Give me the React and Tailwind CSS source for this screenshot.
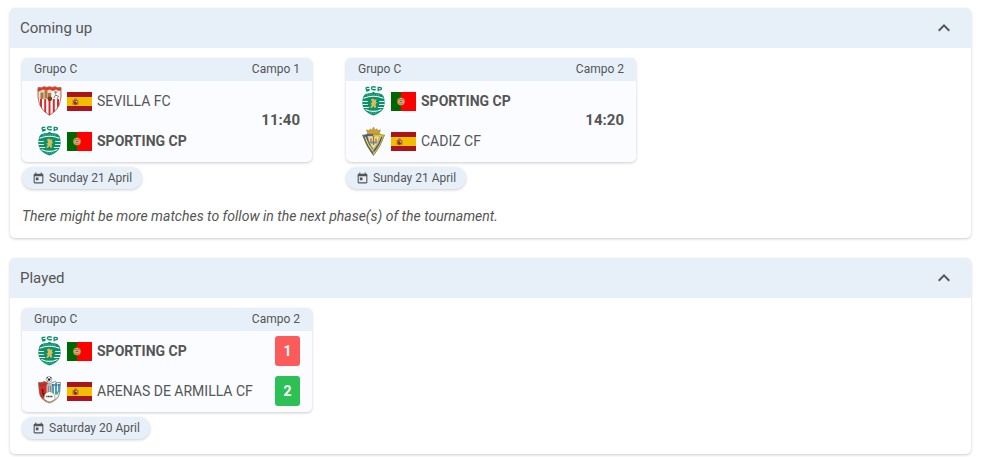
import { useState } from "react";
import { MdKeyboardArrowUp, MdKeyboardArrowDown, MdToday } from "react-icons/md";

const SevillaCrest = () => (
  <svg viewBox="0 0 25 30" className="h-[30px] w-[25px]" aria-hidden="true">
    <defs>
      <clipPath id="sevilla">
        <path d="M1 1.500Q4.500 2.500 7 .7Q9.500 2 12.500 .7Q15.500 2 18 .7Q20.500 2.500 24 1.500Q24.800 12 22.500 18.500Q19.500 25.500 12.500 29.300Q5.500 25.500 2.500 18.500Q.2 12 1 1.500Z" />
      </clipPath>
    </defs>
    <g clipPath="url(#sevilla)">
      <path fill="#fff" d="M0 0h25v30H0z" />
      <path
        stroke="#dd2630"
        strokeWidth="2"
        d="M4 13v17M8.200 13v17M12.500 13v17M16.800 13v17M21 13v17"
      />
      <path fill="#eadcc8" d="M0 0h25v13H0z" />
      <path fill="#e0392c" d="M0 0h25v3.500l-3 1.500-3-1.500-3 1.500-3.500-1.500L9 5 6 3.500 3 5 0 6z" />
      <path fill="#a87947" d="M3.500 6.500h3V13h-3zM7.500 5h3v7.500h-3zM11 7h3v5h-3z" />
      <path fill="#fbfbf6" d="M15 5h7.500v8H15z" />
      <path fill="none" stroke="#6b6e73" strokeWidth=".9" d="M17 6h3.500M18.700 5.500v3M16.800 12l1.700-3 3 1.300-1.500 2.500" />
      <circle cx="12.800" cy="12.800" r="2.400" fill="#7b3d12" />
    </g>
    <path
      fill="none"
      stroke="#a8552f"
      strokeWidth=".8"
      d="M1 1.500Q4.500 2.500 7 .7Q9.500 2 12.500 .7Q15.500 2 18 .7Q20.500 2.500 24 1.500Q24.800 12 22.500 18.500Q19.500 25.500 12.500 29.300Q5.500 25.500 2.500 18.500Q.2 12 1 1.500Z"
    />
  </svg>
);

const SportingCrest = () => (
  <svg viewBox="0 0 25 30" className="h-[30px] w-[25px]" aria-hidden="true">
    <g fill="none" stroke="#12906c" strokeWidth="1.400">
      <path d="M8.300 1.500Q4.800.9 5 2.500T8 3.600Q8.300 5.200 5 4.700" />
      <path d="M14.700 1.200Q10.300.1 10.500 2.200T14.900 3.500" />
      <path d="M17.200 5.200V1.400Q20.800 1.200 20.400 2.700T17.400 3.700" />
    </g>
    <path
      fill="#0d8f69"
      d="M2.500 10Q4.500 7 8 7.300Q10.500 7.300 12.500 5.800Q14.500 7.300 17 7.300Q20.500 7 22.500 10Q23.800 13 23.700 17Q23.500 22 20.500 25Q17.500 28 12.500 29.500Q7.500 28 4.500 25Q1.500 22 1.300 17Q1.200 13 2.500 10Z"
    />
    <path
      fill="none"
      stroke="#e8f7f2"
      strokeWidth="1.100"
      d="M2.500 12.300Q12.500 8.300 22.500 12.300M1.500 15.500h5.300M18.200 15.500h5.300M1.500 18.500h5.300M18.200 18.500h5.300M2.200 21.500h6M16.800 21.500h6M4.500 23.500Q12.500 27.300 20.500 23.500"
    />
    <path stroke="#7accb4" strokeWidth=".9" strokeDasharray="1 .8" d="M6 9h13M8.500 27h8" />
    <circle cx="12.500" cy="17.300" r="5.600" fill="#0d8f69" />
    <path
      fill="#d9bc54"
      d="M10 13.300l2.500-.8 1.200 1.600 1.800-1-.6 2.600 1.200 1-1.600 1.400.7 3.200-1.700.8-.8-2.200-1.900 2.200-1.600-.4 1.700-3-1.600-.6 1.800-1.600z"
    />
  </svg>
);

const CadizCrest = () => (
  <svg viewBox="0 0 25 30" className="h-[30px] w-[25px]" aria-hidden="true">
    <path fill="#2f55a8" d="M1.500 9Q4 9.500 6.500 8H12.500V29.500Q5 20 1.500 9Z" />
    <path fill="#f0cf22" d="M12.500 8h6Q21 9.500 23.500 9Q20 20 12.500 29.500Z" />
    <path
      fill="#e9dcae"
      stroke="#a58d3c"
      strokeWidth=".5"
      d="M6.500 10h12Q17.500 17 12.500 23.500Q7.500 17 6.500 10Z"
    />
    <path fill="#f0cf22" d="M3.500 10.500l1.300.2Q7 18 12.500 24.500v2.300Q6 19.500 3.500 10.500Z" />
    <path fill="#2f55a8" d="M21.500 10.500l-1.300.2Q18 18 12.500 24.500v2.300Q19 19.500 21.500 10.500Z" />
    <path fill="#6c89a9" d="M8.500 15.500h8l-1 2h-6z" />
    <path stroke="#a8732e" strokeWidth="1.300" d="M12.500 10v9M10 12.500v3M15 12.500v3" />
    <path
      fill="none"
      stroke="#7f7740"
      strokeWidth=".8"
      d="M1.500 9Q4 9.500 6.500 8H18.500Q21 9.500 23.500 9Q20 20 12.500 29.500Q5 20 1.500 9Z"
    />
    <path
      fill="#c9a136"
      stroke="#9a7a28"
      strokeWidth=".5"
      d="M6.800 8L5.500 3.800 8.200 4.800 9.200 2.800l1.600 1.400L12.500 1l1.700 3.200 1.600-1.400 1 2 2.700-1L18.200 8Z"
    />
  </svg>
);

const ArenasCrest = () => (
  <svg viewBox="0 0 25 30" className="h-[30px] w-[25px]" aria-hidden="true">
    <path
      fill="#e0281f"
      stroke="#5a6260"
      strokeWidth=".7"
      d="M1.500 6.500Q5 7 7.500 5.500L12.500 8V27Q3 24 2.300 16Z"
    />
    <path
      fill="#eaf5fb"
      stroke="#5a6260"
      strokeWidth=".7"
      d="M12.500 8L17.500 5.500Q20 7 23.500 6.500L22.700 16Q22 24 12.500 27Z"
    />
    <path stroke="#3b94c8" strokeWidth="1.800" d="M16 8v10M19 7v11M22 8v8" />
    <path stroke="#6d4444" strokeWidth="1.500" strokeDasharray="1.300 .8" d="M3 9h7" />
    <path stroke="#44637c" strokeWidth="1.500" strokeDasharray="1.300 .8" d="M15 9h7.500" />
    <path fill="#4d2328" d="M4.500 13h2v4h1.300v4H6.500l-1-3z" />
    <path fill="#4cae50" d="M18.500 15.500h3.500l-1.500 3h-2.500z" />
    <path fill="#b9b9b4" d="M9.500 9l3-3 2.500 3v8H9.500z" />
    <path fill="#8b8b86" d="M11 10h1v6h-1zM13 10h1v6h-1z" />
    <circle cx="12" cy="3.300" r="2.900" fill="#f8f8f8" stroke="#666" strokeWidth=".5" />
    <path fill="#252525" d="M11.200 2.500h1.900l.5 1.500-1.500 1-1.400-1zM9.500 2l.9-1 .7.500-.5 1zM14.600 2l-.9-1-.7.500.5 1zM9.800 5l1-.3.400 1z" />
    <path
      fill="#fff"
      stroke="#99958c"
      strokeWidth=".6"
      d="M7.500 19Q9 16 12.500 15.500Q16 16 17.500 19L18 23 12.500 26.500 7 23Z"
    />
    <path stroke="#333" strokeWidth="1.300" strokeDasharray="1.200 .4" d="M9.300 20.500h6.500" />
    <path fill="none" stroke="#b69758" strokeWidth="1" d="M5.500 22.500Q12.500 29.500 19.500 22.500" />
  </svg>
);

const SpainFlag = () => (
  <svg viewBox="0 0 25 19" className="h-[19px] w-[25px]" role="img" aria-label="Spain">
    <path fill="#aa151b" d="M0 0h25v19H0z" />
    <path fill="#f1bf00" d="M0 5h25v9H0z" />
    <path fill="#ad7c2f" d="M5.500 8h1v5h-1zM10.500 8h1v5h-1zM7 7q1.500-1.400 3 0v2H7z" />
    <path fill="#a0322a" d="M6.500 8.500h4V12l-2 1.200-2-1.200z" />
    <path fill="#e2c5bd" d="M8.500 9h1.500v1.500H8.500z" />
    <path fill="#3e3147" d="M8 10h1.200v1.300H8z" />
  </svg>
);

const PortugalFlag = () => (
  <svg viewBox="0 0 25 19" className="h-[19px] w-[25px]" role="img" aria-label="Portugal">
    <path fill="#f00" d="M0 0h25v19H0z" />
    <path fill="#060" d="M0 0h10v19H0z" />
    <circle cx="10" cy="9.500" r="3.700" fill="#d8cf35" stroke="#8d8224" strokeWidth=".6" />
    <path fill="#f03434" d="M7.700 7h4.600v3.300Q12 12 10 12.500Q8 12 7.700 10.300Z" />
    <path fill="#fff" d="M8.500 7.800h3v2.500L10 11.700l-1.500-1.400z" />
    <path stroke="#315b9a" strokeWidth=".9" d="M10 8v3M8.800 9.400h2.400" />
  </svg>
);

const teams = {
  sevilla: { name: "SEVILLA FC", Crest: SevillaCrest, Flag: SpainFlag },
  sporting: { name: "SPORTING CP", Crest: SportingCrest, Flag: PortugalFlag, selected: true },
  cadiz: { name: "CADIZ CF", Crest: CadizCrest, Flag: SpainFlag },
  arenas: { name: "ARENAS DE ARMILLA CF", Crest: ArenasCrest, Flag: SpainFlag },
};

const upcoming = [
  { id: 1, group: "Grupo C", field: "Campo 1", home: "sevilla", away: "sporting", time: "11:40", date: "Sunday 21 April" },
  { id: 2, group: "Grupo C", field: "Campo 2", home: "sporting", away: "cadiz", time: "14:20", date: "Sunday 21 April" },
];

const played = [
  { id: 3, group: "Grupo C", field: "Campo 2", home: "sporting", away: "arenas", score: [1, 2], date: "Saturday 20 April" },
];

const TeamRow = ({ team, goals, won }) => {
  const { name, Crest, Flag, selected } = teams[team];

  return (
    <div className="flex h-10 items-center gap-[5px]">
      <Crest />
      <Flag />
      <span className={selected ? "font-bold" : ""}>{name}</span>
      {goals !== undefined && (
        <span
          className={`ml-auto flex h-[30px] w-[25px] items-center justify-center rounded-[3px] font-bold text-white ${
            won ? "bg-[#2dc155]" : "bg-[#fb5b5b]"
          }`}
        >
          {goals}
        </span>
      )}
    </div>
  );
};

const MatchCard = ({ match }) => {
  const { group, field, home, away, time, score, date } = match;

  return (
    <li className="flex flex-col items-start gap-[5px]">
      <article className="w-[290px] overflow-hidden rounded-[5px] bg-[#fafcff] shadow-[0_1px_3px_rgba(0,0,0,0.2)]">
        <header className="flex justify-between bg-[#e7f0f9] px-3 text-xs leading-[23px]">
          <span>{group}</span>
          <span>{field}</span>
        </header>
        <div className="flex items-center pr-3 pb-px pl-[15px] text-sm">
          <div className="flex-1">
            <TeamRow team={home} goals={score?.[0]} won={score && score[0] > score[1]} />
            <TeamRow team={away} goals={score?.[1]} won={score && score[1] > score[0]} />
          </div>
          {time && <time className="text-[15px] font-bold">{time}</time>}
        </div>
      </article>
      <div className="flex items-center gap-1 rounded-full bg-[#e7f0f9] px-[10px] text-xs leading-[22px] shadow-[0_1px_3px_rgba(0,0,0,0.2)]">
        <MdToday size={13} aria-hidden="true" />
        <span>{date}</span>
      </div>
    </li>
  );
};

const Panel = ({ title, matches, note }) => {
  const [open, setOpen] = useState(true);
  const Arrow = open ? MdKeyboardArrowUp : MdKeyboardArrowDown;

  return (
    <section className="overflow-hidden rounded-[5px] bg-white shadow-[0_1px_3px_rgba(0,0,0,0.2)]">
      <h2>
        <button
          type="button"
          aria-expanded={open}
          onClick={() => setOpen(!open)}
          className="flex h-10 w-full items-center justify-between bg-[#e7f0f9] pr-[15px] pl-[10px] text-[15px]"
        >
          {title}
          <Arrow size={24} aria-hidden="true" />
        </button>
      </h2>
      {open && (
        <div className={note ? "px-3 pt-[10px] pb-3" : "px-3 pt-[10px] pb-[15px]"}>
          <ul className="flex flex-wrap gap-x-[34px] gap-y-4">
            {matches.map((match) => (
              <MatchCard key={match.id} match={match} />
            ))}
          </ul>
          {note && <p className="mt-[17px] text-sm italic">{note}</p>}
        </div>
      )}
    </section>
  );
};

const App = () => {
  return (
    <main className="flex flex-col gap-5 bg-white pt-2 pr-[31px] pb-[3px] pl-[10px] font-['Roboto',sans-serif] text-[#555]">
      <Panel
        title="Coming up"
        matches={upcoming}
        note="There might be more matches to follow in the next phase(s) of the tournament."
      />
      <Panel title="Played" matches={played} />
    </main>
  );
};

export default App;
